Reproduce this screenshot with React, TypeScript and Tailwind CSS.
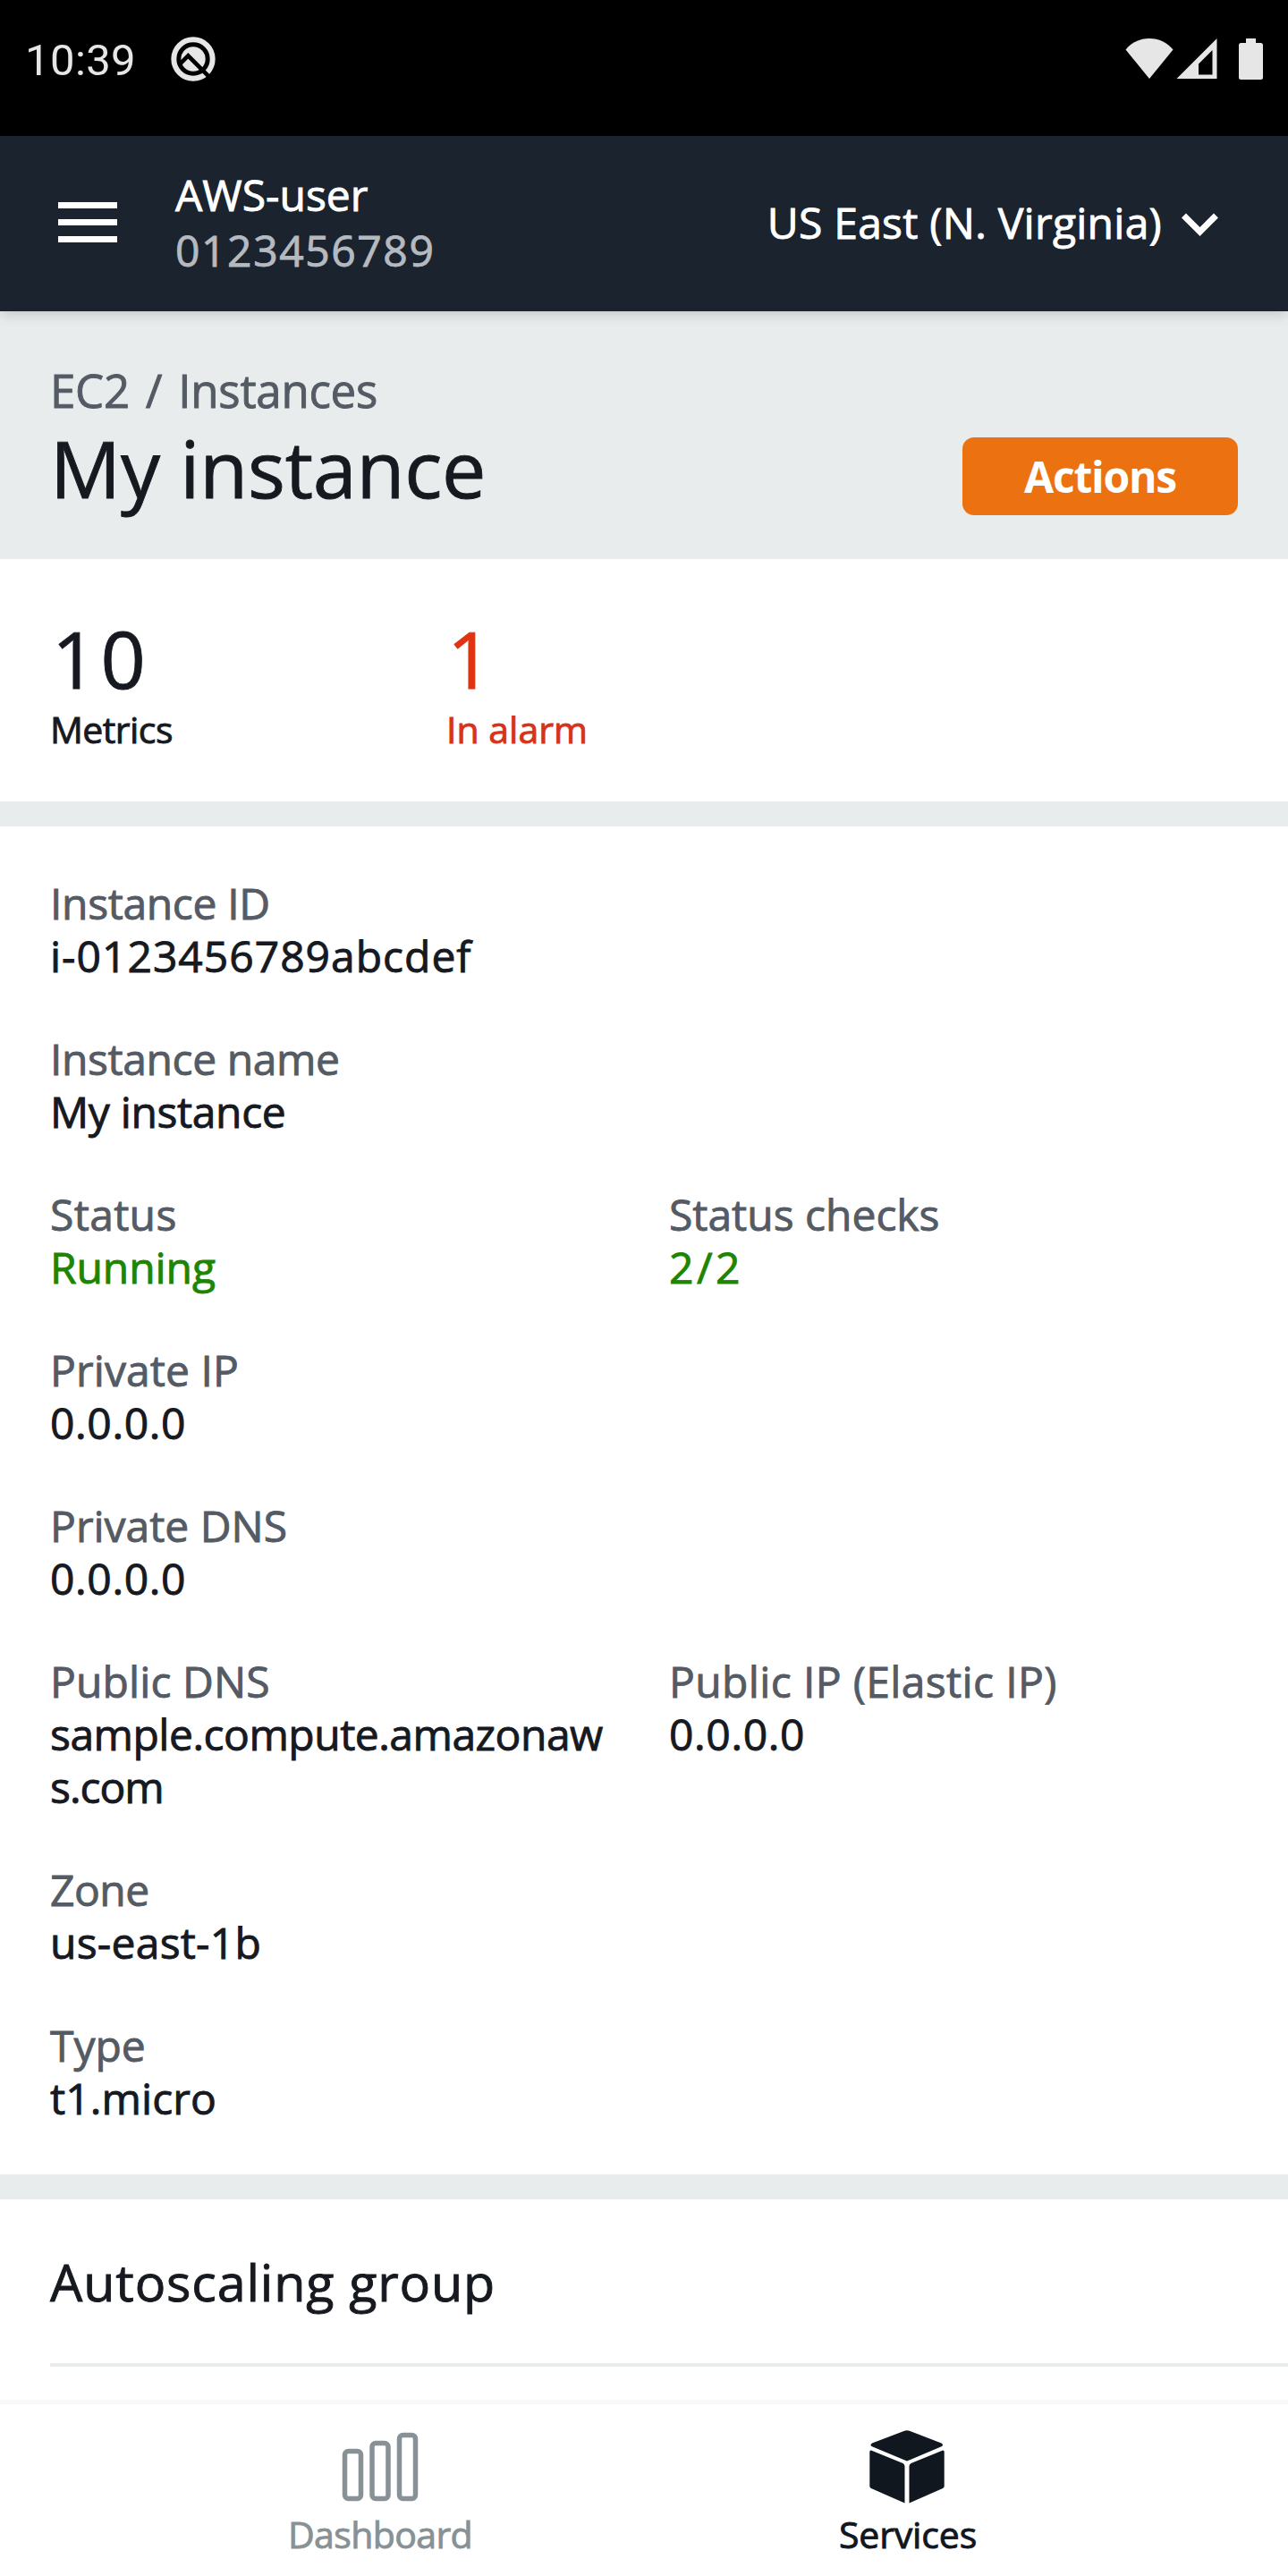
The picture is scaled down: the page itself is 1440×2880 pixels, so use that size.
import type { ReactNode } from "react";

function StatusBar() {
  return (
    <div className="h-[152px] bg-black text-[#e6e6e6] [-webkit-text-stroke:0px]">
      <div className="flex h-[136px] items-center justify-between pl-[28px] pr-[28px]">
        <div className="flex items-center">
          <span className="w-[163px] font-['Roboto',sans-serif] text-[49px] leading-[50px] tracking-[0.4px]">10:39</span>
          <svg className="mb-[4px] h-[50px] w-[50px]" viewBox="61 63 150 150" fill="none">
            <circle cx="136" cy="138" r="65" stroke="#e6e6e6" strokeWidth="18" />
            <circle cx="136" cy="138" r="41" fill="#e6e6e6" />
            <path d="M92 154L119 127L194 202" stroke="#000" strokeWidth="14" />
          </svg>
        </div>
        <div className="mb-[5px] flex items-center">
          <svg className="h-[46px] w-[54px]" viewBox="0 0 54 46" fill="#e6e6e6">
            <path d="M0.5 12.5C7 4.500 16.500 0 27 0C37.500 0 47 4.500 53.500 12.500L27 45Z" />
          </svg>
          <svg className="ml-[3px] h-[46px] w-[46px]" viewBox="0 0 46 46" fill="#e6e6e6">
            <path fillRule="evenodd" d="M45.500 0V45H0.500ZM40.500 13L25 28.500V40.500H40.500Z" />
          </svg>
          <svg className="ml-[24px] h-[46px] w-[27px]" viewBox="0 0 27 46" fill="#e6e6e6">
            <path d="M8 0H19V5H24.500Q27 5 27 7.500V43.500Q27 46 24.500 46H2.500Q0 46 0 43.500V7.500Q0 5 2.500 5H8Z" />
          </svg>
        </div>
      </div>
    </div>
  );
}

function Header() {
  return (
    <header className="relative flex h-[196px] items-center justify-between bg-[#1b232e] pb-[3px] pl-[65px] pr-[77px] text-white shadow-[0_3px_14px_rgba(0,0,0,0.17)]">
      <div className="flex items-center">
        <div className="flex w-[66px] flex-col gap-[12px]">
          <div className="h-[7px] bg-white" />
          <div className="h-[7px] bg-white" />
          <div className="h-[7px] bg-white" />
        </div>
        <div className="ml-[65px] text-[48px] leading-[62px]">
          <div>AWS-user</div>
          <div className="tracking-[1.6px] text-[#b5bac0]">0123456789</div>
        </div>
      </div>
      <div className="flex items-center">
        <span className="text-[48px] leading-[62px] tracking-[0.26px]">US East (N. Virginia)</span>
        <svg className="ml-[21px] mt-[5px] h-[28px] w-[43px]" viewBox="0 0 43 28" fill="none">
          <path d="M3.500 4L21.500 22L39.500 4" stroke="#fff" strokeWidth="7" />
        </svg>
      </div>
    </header>
  );
}

function TitleBar() {
  return (
    <section className="flex h-[277px] items-end justify-between bg-[#e8ecec] pb-[49px] pl-[56px] pr-[56px]">
      <div className="mb-[3px]">
        <div className="text-[51px] leading-[60px] tracking-[-0.25px] text-[#545b64] [word-spacing:5px]">EC2 / Instances</div>
        <h1 className="mt-[7px] text-[88px] leading-[100px] tracking-[-0.25px]">My instance</h1>
      </div>
      <button className="h-[87px] w-[308px] rounded-[13px] bg-[#ec7211] text-[48px] font-bold leading-[87px] tracking-[-1.200px] text-white [-webkit-text-stroke:0px]">
        Actions
      </button>
    </section>
  );
}

function Metrics() {
  return (
    <section className="flex h-[271px] bg-white pl-[56px] pt-[61px]">
      <div className="w-[442px]">
        <div className="pl-[2px] text-[88px] leading-[100px] tracking-[4.200px]">10</div>
        <div className="mt-[4px] text-[41px] leading-[50px] tracking-[-0.55px]">Metrics</div>
      </div>
      <div>
        <div className="pl-[2px] text-[88px] leading-[100px] text-[#df3312]">1</div>
        <div className="mt-[4px] pl-[1px] text-[41px] leading-[50px] text-[#d6331a]">In alarm</div>
      </div>
    </section>
  );
}

function Field({ label, children, labelClass = "", valueClass = "" }: { label: string; children: ReactNode; labelClass?: string; valueClass?: string }) {
  return (
    <div className="w-[636px] shrink-0">
      <div className={`text-[#545b64] ${labelClass}`}>{label}</div>
      <div className={`break-all ${valueClass}`}>{children}</div>
    </div>
  );
}

function Row({ children }: { children: ReactNode }) {
  return <div className="flex gap-[56px]">{children}</div>;
}

function Details() {
  return (
    <section className="flex flex-col gap-[56px] bg-white px-[56px] py-[56px] text-[48px] leading-[59px]">
      <Row>
        <Field label="Instance ID" labelClass="tracking-[-0.35px]" valueClass="tracking-[1px]">i-0123456789abcdef</Field>
      </Row>
      <Row>
        <Field label="Instance name" labelClass="tracking-[-0.4px]" valueClass="tracking-[-0.35px]">My instance</Field>
      </Row>
      <Row>
        <Field label="Status" labelClass="tracking-[0.35px]" valueClass="text-[#1d8502] tracking-[-0.1px]">Running</Field>
        <Field label="Status checks" valueClass="text-[#1d8502] tracking-[3.500px]">2/2</Field>
      </Row>
      <Row>
        <Field label="Private IP" labelClass="tracking-[0.1px]" valueClass="tracking-[0.64px]">0.0.0.0</Field>
      </Row>
      <Row>
        <Field label="Private DNS" valueClass="tracking-[0.64px]">0.0.0.0</Field>
      </Row>
      <Row>
        <Field label="Public DNS" labelClass="tracking-[0.1px]" valueClass="tracking-[-0.5px]">
          sample.compute.amazonaw
          <br />
          <span className="tracking-[-1px]">s.com</span>
        </Field>
        <Field label="Public IP (Elastic IP)" labelClass="tracking-[0.36px]" valueClass="tracking-[0.64px]">0.0.0.0</Field>
      </Row>
      <Row>
        <Field label="Zone" labelClass="tracking-[-0.5px]" valueClass="tracking-[0.25px]">us-east-1b</Field>
      </Row>
      <Row>
        <Field label="Type" valueClass="tracking-[0.1px]">t1.micro</Field>
      </Row>
    </section>
  );
}

function TabBar() {
  return (
    <nav className="flex h-[192px] bg-white px-[130px] pt-[28px] text-[41px] leading-[50px]">
      <div className="flex w-[590px] flex-col items-center text-[#879196]">
        <svg className="h-[84px] w-[86px]" viewBox="0 0 86 84" fill="none" stroke="#879196" strokeWidth="5.500">
          <rect x="3.500" y="24.500" width="18" height="53" rx="4" />
          <rect x="34" y="15.500" width="18" height="62" rx="4" />
          <rect x="64.500" y="6.500" width="18" height="71" rx="4" />
        </svg>
        <span className="mt-[8px] tracking-[-0.6px]">Dashboard</span>
      </div>
      <div className="flex w-[590px] flex-col items-center text-[#10171f]">
        <svg className="mr-[2px] h-[84px] w-[84px]" viewBox="0 0 84 84" fill="#10171f">
          <path d="M1.500 17.500Q1.500 16.500 3 15.600L38.500 2Q42 0.300 45.500 2L80.500 15.600Q82 16.500 82 17.500Q82 18.500 80.500 19.200L42 35.500L3 19.200Q1.500 18.500 1.500 17.500Z" />
          <path d="M0.300 25.500Q0.300 22.800 2.500 23.700L37.500 38Q39.500 39 39.500 41.500V82.500L2 66Q0.300 65.200 0.300 63.500Z" />
          <path d="M83.700 25.500Q83.700 22.800 81.500 23.700L46.500 38Q44.500 39 44.500 41.500V82.500L82 66Q83.700 65.200 83.700 63.500Z" />
        </svg>
        <span className="mt-[8px] tracking-[-0.15px]">Services</span>
      </div>
    </nav>
  );
}

export default function App() {
  return (
    <div className="flex h-[2880px] w-[1440px] flex-col overflow-hidden bg-white font-['Open_Sans',sans-serif] text-[#16191f] [-webkit-text-stroke:0.9px]">
      <StatusBar />
      <Header />
      <TitleBar />
      <Metrics />
      <div className="h-[28px] bg-[#e8ecec]" />
      <Details />
      <div className="h-[28px] shrink-0 bg-[#e8ecec]" />
      <section className="flex-1 pl-[56px]">
        <h2 className="flex h-[183px] items-center text-[57.5px] leading-[78px] tracking-[0.84px]">Autoscaling group</h2>
        <div className="h-[4px] bg-[#e8ecec]" />
      </section>
      <div className="h-[5px] bg-[#f7f8f8]" />
      <TabBar />
    </div>
  );
}
